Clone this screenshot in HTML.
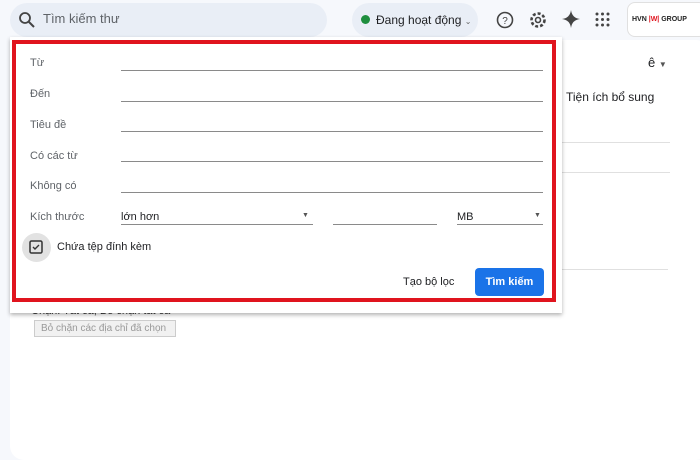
<!DOCTYPE html>
<html><head><meta charset="utf-8"><style>
*{margin:0;padding:0;box-sizing:border-box}
body{width:700px;height:449px;background:#f6f8fc;font-family:"Liberation Sans",sans-serif;position:relative;overflow:hidden;color:#202124}
.a{position:absolute}
.lbl{position:absolute;left:30px;font-size:11px;color:#5f6368}
.ln{position:absolute;left:121px;width:422px;height:1px;background:#8a8a8a}
</style></head><body>
<div class="a" style="left:10px;top:3px;width:317px;height:34px;border-radius:17px;background:#e9eef6"></div>
<svg class="a" style="left:18px;top:11px" width="18" height="18" viewBox="0 0 18 18"><circle cx="7" cy="7" r="5" fill="none" stroke="#444" stroke-width="1.8"/><path d="M11 11l5 5" stroke="#444" stroke-width="2"/></svg>
<div class="a" style="left:43px;top:11px;font-size:13px;color:#5f6368">Tìm kiếm thư</div>
<div class="a" style="left:352px;top:3px;width:126px;height:34px;border-radius:17px;background:#e9eef6"></div>
<div class="a" style="left:361px;top:15px;width:9px;height:9px;border-radius:50%;background:#1e8e3e"></div>
<div class="a" style="left:376px;top:13px;font-size:12px;color:#202124">Đang hoạt động <span style="font-size:8px;color:#666">⌄</span></div>
<svg class="a" style="left:495px;top:10px" width="20" height="20" viewBox="0 0 20 20"><circle cx="10" cy="10" r="7.5" fill="none" stroke="#444" stroke-width="1.6"/><text x="10" y="14" font-size="10" text-anchor="middle" fill="#444" font-family="Liberation Sans">?</text></svg>
<svg class="a" style="left:528px;top:10px" width="20" height="20" viewBox="0 0 20 20"><circle cx="10" cy="10" r="6.5" fill="none" stroke="#444" stroke-width="2.6" stroke-dasharray="3 2"/><circle cx="10" cy="10" r="2.5" fill="none" stroke="#444" stroke-width="1.6"/></svg>
<svg class="a" style="left:561px;top:9px" width="20" height="20" viewBox="0 0 20 20"><path d="M10 1Q11 9 19 10Q11 11 10 19Q9 11 1 10Q9 9 10 1Z" fill="#444"/></svg>
<svg class="a" style="left:595px;top:12px" width="15" height="15" viewBox="0 0 15 15" fill="#444"><circle cx="2" cy="2" r="1.5"/><circle cx="7.5" cy="2" r="1.5"/><circle cx="13" cy="2" r="1.5"/><circle cx="2" cy="7.5" r="1.5"/><circle cx="7.5" cy="7.5" r="1.5"/><circle cx="13" cy="7.5" r="1.5"/><circle cx="2" cy="13" r="1.5"/><circle cx="7.5" cy="13" r="1.5"/><circle cx="13" cy="13" r="1.5"/></svg>
<div class="a" style="left:627px;top:2px;width:80px;height:35px;border-radius:8px;background:#fff;border:1px solid #e0e0e0"></div>
<div class="a" style="left:632px;top:16px;font-size:7px;font-weight:bold;color:#222">HVN <span style="color:#e0141e">|W|</span> GROUP</div>
<div class="a" style="left:10px;top:40px;width:700px;height:420px;background:#fff;border-radius:14px"></div>
<div class="a" style="left:648px;top:55px;font-size:13px">ê <span style="font-size:8px;color:#555">▼</span></div>
<div class="a" style="left:566px;top:90px;font-size:12px">Tiện ích bổ sung</div>
<div class="a" style="left:560px;top:142px;width:110px;height:1px;background:#e0e0e0"></div>
<div class="a" style="left:560px;top:172px;width:110px;height:1px;background:#e0e0e0"></div>
<div class="a" style="left:560px;top:269px;width:108px;height:1px;background:#e0e0e0"></div>
<div class="a" style="left:31px;top:305px;font-size:11px;color:#333">Chặn: Tất cả, Bỏ chặn tất cả</div>
<div class="a" style="left:34px;top:320px;width:142px;height:17px;border:1px solid #ccc;background:#f1f1f1;font-size:10px;color:#999;padding:2px 0 0 6px">Bỏ chặn các địa chỉ đã chọn</div>
<div class="a" style="left:10px;top:37px;width:552px;height:276px;background:#fff;box-shadow:0 2px 4px rgba(0,0,0,.3)"></div>
<div class="a" style="left:12px;top:40px;width:544px;height:262px;border:4px solid #e0141e"></div>
<div class="lbl" style="top:57px">Từ</div><div class="ln" style="top:70px"></div>
<div class="lbl" style="top:88px">Đến</div><div class="ln" style="top:101px"></div>
<div class="lbl" style="top:119px">Tiêu đề</div><div class="ln" style="top:131px"></div>
<div class="lbl" style="top:150px">Có các từ</div><div class="ln" style="top:161px"></div>
<div class="lbl" style="top:180px">Không có</div><div class="ln" style="top:192px"></div>
<div class="lbl" style="top:211px">Kích thước</div>
<div class="a" style="left:121px;top:211px;font-size:11px">lớn hơn</div>
<div class="a" style="left:302px;top:212px;font-size:7px;color:#555">▼</div>
<div class="a" style="left:121px;top:224px;width:192px;height:1px;background:#8a8a8a"></div>
<div class="a" style="left:333px;top:224px;width:104px;height:1px;background:#8a8a8a"></div>
<div class="a" style="left:457px;top:211px;font-size:11px">MB</div>
<div class="a" style="left:534px;top:212px;font-size:7px;color:#555">▼</div>
<div class="a" style="left:457px;top:224px;width:86px;height:1px;background:#8a8a8a"></div>
<div class="a" style="left:22px;top:233px;width:29px;height:29px;border-radius:50%;background:#e2e2e2"></div>
<svg class="a" style="left:29px;top:240px" width="14" height="14" viewBox="0 0 14 14"><rect x="1" y="1" width="12" height="12" rx="1.5" fill="none" stroke="#333" stroke-width="1.5"/><path d="M4 7l2 2 4-4" fill="none" stroke="#333" stroke-width="1.4"/></svg>
<div class="a" style="left:57px;top:241px;font-size:11px">Chứa tệp đính kèm</div>
<div class="a" style="left:403px;top:276px;font-size:11px">Tạo bộ lọc</div>
<div class="a" style="left:475px;top:268px;width:69px;height:28px;border-radius:4px;background:#1a73e8;color:#fff;font-size:11px;font-weight:bold;text-align:center;line-height:28px">Tìm kiếm</div>
</body></html>
